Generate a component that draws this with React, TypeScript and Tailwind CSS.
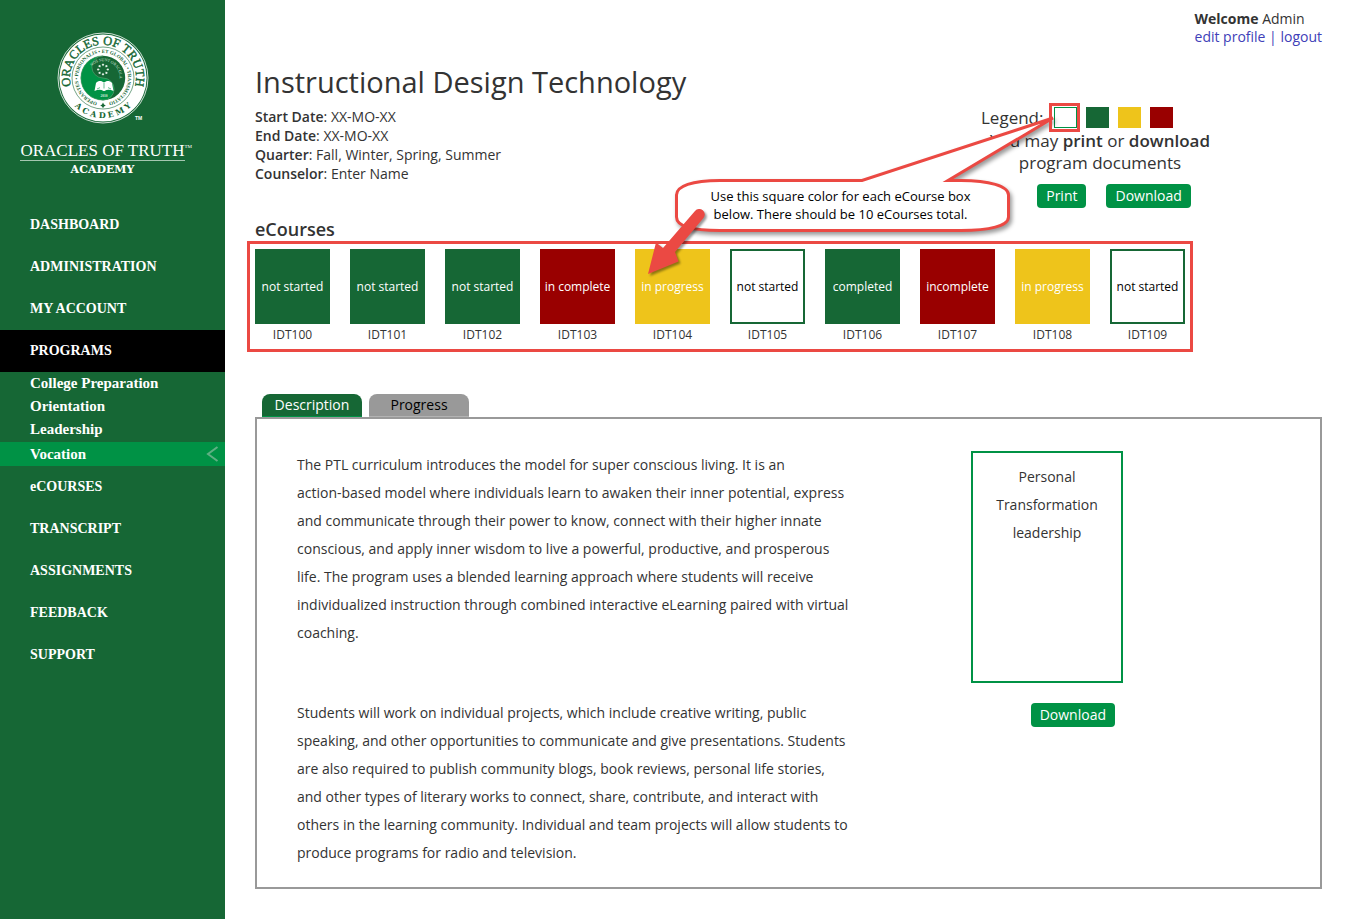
import React from "react";

type Status = "green" | "red" | "yellow" | "empty";

const courses: { code: string; label: string; status: Status }[] = [
  { code: "IDT100", label: "not started", status: "green" },
  { code: "IDT101", label: "not started", status: "green" },
  { code: "IDT102", label: "not started", status: "green" },
  { code: "IDT103", label: "in complete", status: "red" },
  { code: "IDT104", label: "in progress", status: "yellow" },
  { code: "IDT105", label: "not started", status: "empty" },
  { code: "IDT106", label: "completed", status: "green" },
  { code: "IDT107", label: "incomplete", status: "red" },
  { code: "IDT108", label: "in progress", status: "yellow" },
  { code: "IDT109", label: "not started", status: "empty" },
];

const tileStyles: Record<Status, string> = {
  green: "bg-[#166735] text-white",
  red: "bg-[#990000] text-white",
  yellow: "bg-[#eec41b] text-white",
  empty: "border-2 border-[#166735] bg-white text-black",
};

const details = [
  ["Start Date", "XX-MO-XX"],
  ["End Date", "XX-MO-XX"],
  ["Quarter", "Fall, Winter, Spring, Summer"],
  ["Counselor", "Enter Name"],
];

const programs = ["College Preparation", "Orientation", "Leadership"];

function Seal() {
  return (
    <svg width="94" height="94" viewBox="-47 -47 94 94" role="img" aria-label="Oracles of Truth Academy seal">
      <defs>
        <path id="ring-top" d="M-31 11 A33 33 0 1 1 31 11" />
        <path id="ring-bottom" d="M-40 0 A40 40 0 0 0 40 0" />
        <path id="ring-inner" d="M-3 24.8 A25 25 0 1 1 3 24.8" />
        <path id="ring-motto" d="M-13.6 -9 A16.3 16.3 0 0 1 16 4" />
      </defs>
      <circle r="45" fill="none" stroke="#fff" strokeWidth="0.8" />
      <circle r="43.6" fill="#fff" />
      <circle r="31" fill="none" stroke="#166735" strokeWidth="0.6" />
      <circle r="22.2" fill="#166735" />
      <path
        d="M0 -22.2 A22.2 22.2 0 0 0 0 22.2 A11.1 11.1 0 0 0 0 0 A11.1 11.1 0 0 1 0 -22.2Z"
        fill="#009245"
        stroke="#6fae83"
        strokeWidth="0.5"
      />
      <g fontFamily="'Liberation Serif', serif" fill="#166735">
        <text fontSize="12.5" stroke="#166735" strokeWidth="0.4">
          <textPath href="#ring-top" startOffset="50%" textAnchor="middle">ORACLES OF TRUTH</textPath>
        </text>
        <text fontSize="8" fontWeight="700" fontFamily="'DejaVu Serif', serif">
          <textPath href="#ring-bottom" startOffset="50%" textAnchor="middle">A C A D E M Y</textPath>
        </text>
        <text fontSize="5" fontWeight="700">
          <textPath href="#ring-inner" startOffset="50%" textAnchor="middle">
            OPERANTES • PERSONALIS • ET GLOBAL • TRANSMUTATIO
          </textPath>
        </text>
        <text fontSize="4" fill="#dcebdf">
          <textPath href="#ring-motto" startOffset="50%" textAnchor="middle">NOS SUNT ORACULA</textPath>
        </text>
        <text fontSize="3.6" fontWeight="700" fill="#dcebdf" x="1" y="19" textAnchor="middle">2010</text>
      </g>
      <path d="M0 24.6 l1 1.8 1.8 1 -1.8 1 -1 1.8 -1 -1.8 -1.8 -1 1.8 -1z" fill="#166735" />
      <g fill="#e3f0e6">
        {[0, 45, 90, 135, 180, 225, 270, 315].map((angle) => (
          <path key={angle} d="M0 -13.4 l1.3 -1.7 -1.3 -1.1 -1.3 1.1z" transform={`rotate(${angle} 0 -8.5) translate(0 1.6)`} />
        ))}
      </g>
      <path d="M-7 5 C-4.5 2.4 -1.5 2.6 1 4.6 C3.5 2.6 6.5 2.4 9 5 L10.5 13 C7 11.4 4 11.4 1.5 13 L0.5 13 C-2 11.4 -5 11.4 -8.5 13Z" fill="#fff" />
      <path d="M1 5 V10.5 M-6 11 L-3 9.6 M8 11 L5 9.6" stroke="#009245" strokeWidth="0.6" fill="none" />
      <text x="32" y="42" fontSize="5" fontWeight="700" fill="#fff" fontFamily="'Liberation Sans', sans-serif">TM</text>
    </svg>
  );
}

function NavItem({ label, active = false }: { label: string; active?: boolean }) {
  return (
    <li>
      <a
        href="#"
        className={`flex h-[42px] items-center pl-[30px] text-[14px] leading-[20px] ${active ? "bg-black" : ""}`}
      >
        {label}
      </a>
    </li>
  );
}

function Sidebar() {
  return (
    <aside className="w-[225px] shrink-0 bg-[#166735] text-white">
      <div className="flex flex-col items-center pt-[31px] pr-[20px] font-['Liberation_Serif',serif]">
        <Seal />
        <div className="mt-4 flex items-start border-b border-[#a5c7b0]">
          <span className="text-[17px] leading-[19px]">ORACLES OF TRUTH</span>
          <span className="relative w-0">
            <span className="absolute top-[3px] left-0 text-[5px] leading-[6px]">TM</span>
          </span>
        </div>
        <span className="mt-[2px] font-['DejaVu_Serif',serif] text-[11px] leading-[14px] font-bold">ACADEMY</span>
      </div>
      <nav aria-label="Main" className="mt-[27px] font-['Liberation_Serif',serif] font-bold">
        <ul>
          <NavItem label="DASHBOARD" />
          <NavItem label="ADMINISTRATION" />
          <NavItem label="MY ACCOUNT" />
          <NavItem label="PROGRAMS" active />
          <li>
            <ul className="text-[15px] leading-[23px]">
              {programs.map((name) => (
                <li key={name}>
                  <a href="#" className="block pl-[30px]">{name}</a>
                </li>
              ))}
              <li className="pt-px">
                <a href="#" className="flex h-6 items-center justify-between bg-[#009245] pr-[6px] pl-[30px]">
                  Vocation
                  <svg width="13" height="16" viewBox="0 0 13 16" aria-hidden="true">
                    <path d="M11.5 1 L2 8 L11.5 15" fill="none" stroke="#5fb083" strokeWidth="2" />
                  </svg>
                </a>
              </li>
            </ul>
          </li>
          <NavItem label="eCOURSES" />
          <NavItem label="TRANSCRIPT" />
          <NavItem label="ASSIGNMENTS" />
          <NavItem label="FEEDBACK" />
          <NavItem label="SUPPORT" />
        </ul>
      </nav>
    </aside>
  );
}

function ActionButton({ children }: { children: React.ReactNode }) {
  return (
    <button type="button" className="h-6 rounded-[4px] bg-[#009245] px-[9px] text-[14px] leading-[24px] text-white">
      {children}
    </button>
  );
}

function Callout() {
  return (
    <div className="pointer-events-none absolute top-0 -left-[311px] h-[140px] w-[390px]">
      <svg width="390" height="140" viewBox="0 0 390 140" className="absolute inset-0 overflow-visible" aria-hidden="true">
        <path
          d="M50 75.5 H192 L383 13 L278 75.500 H291 C319 75.500 338.500 81 338.500 90 V112 C338.500 121 319 125.500 291 125.500 H50 C22 125.500 6.500 121 6.500 112 V90 C6.500 81 22 75.500 50 75.500Z"
          fill="#fff"
          stroke="#eb4943"
          strokeWidth="3"
          className="drop-shadow-[2px_3px_2px_rgba(0,0,0,0.4)]"
        />
      </svg>
      <p className="relative mt-[82px] w-[341px] text-center text-[13px] leading-[18px] text-black">
        Use this square color for each eCourse box
        <br />
        below. There should be 10 eCourses total.
      </p>
    </div>
  );
}

function DocumentsPanel() {
  return (
    <section className="relative mt-[42px] mr-[101px] w-[240px] shrink-0 text-[17px] leading-[22px]">
      <div className="flex h-[25px] items-center">
        <span className="w-[73px]">Legend:</span>
        <div className="flex gap-[9px]">
          <span className="h-[21px] w-[23px] border border-[#009245]" />
          <span className="h-[21px] w-[23px] bg-[#166735]" />
          <span className="h-[21px] w-[23px] bg-[#eec41b]" />
          <span className="h-[21px] w-[23px] bg-[#990000]" />
        </div>
      </div>
      <p className="pr-[2px] text-center">
        You may <strong className="font-semibold">print</strong> or{" "}
        <strong className="font-semibold">download</strong>
        <br />
        program documents
      </p>
      <div className="mt-[10px] flex justify-center gap-5 pl-[26px]">
        <ActionButton>Print</ActionButton>
        <ActionButton>Download</ActionButton>
      </div>
      <Callout />
      <span className="absolute -top-[2px] left-[68px] h-[29px] w-[31px] border-3 border-[#eb4943]" />
    </section>
  );
}

function PointerArrow() {
  return (
    <svg
      width="70"
      height="75"
      viewBox="0 0 70 75"
      className="pointer-events-none absolute -top-[43px] left-[8px] overflow-visible drop-shadow-[2px_2px_1px_rgba(0,0,0,0.4)]"
      aria-hidden="true"
    >
      <path d="M52 5 A5.500 5.500 0 0 1 60.500 12 L32 46 L35.500 55.500 L5 68 L13 36.500 L20 42 Z" fill="#eb4943" />
    </svg>
  );
}

function CourseList() {
  return (
    <section>
      <h2 className="text-[18px] leading-[24px] font-semibold">eCourses</h2>
      <div className="-ml-2 w-fit border-3 border-[#eb4943] p-[5px]">
        <ul className="flex gap-5">
          {courses.map((course) => (
            <li key={course.code} className="relative w-[75px] text-center text-[12px]">
              <a
                href="#"
                className={`flex h-[75px] items-center justify-center leading-[16px] whitespace-nowrap ${tileStyles[course.status]}`}
              >
                {course.label}
              </a>
              <span className="block h-5 leading-[22px]">{course.code}</span>
              {course.code === "IDT104" && <PointerArrow />}
            </li>
          ))}
        </ul>
      </div>
    </section>
  );
}

function ProgramTabs() {
  return (
    <section className="mt-[42px] text-[14px]">
      <div role="tablist" className="flex gap-[7px] pl-[7px]">
        <button
          type="button"
          role="tab"
          aria-selected="true"
          className="h-[23px] w-[100px] rounded-t-[8px] border-b border-[#009245] bg-[#166735] pb-[2px] text-white"
        >
          Description
        </button>
        <button
          type="button"
          role="tab"
          aria-selected="false"
          className="h-[23px] w-[100px] rounded-t-[8px] border-b border-[#b3b3b3] bg-[#999] pb-[2px] text-black"
        >
          Progress
        </button>
      </div>
      <div role="tabpanel" className="flex border-2 border-[#999] px-10 pt-8 pb-5 leading-[28px]">
        <div className="flex w-[554px] flex-col gap-[52px]">
          <p>
            The PTL curriculum introduces the model for super conscious living. It is an
            <br />
            action-based model where individuals learn to awaken their inner potential, express and
            communicate through their power to know, connect with their higher innate conscious, and
            apply inner wisdom to live a powerful, productive, and prosperous life. The program uses a
            blended learning approach where students will receive individualized instruction through
            combined interactive eLearning paired with virtual coaching.
          </p>
          <p>
            Students will work on individual projects, which include creative writing, public
            speaking, and other opportunities to communicate and give presentations. Students are also
            required to publish community blogs, book reviews, personal life stories, and other types
            of literary works to connect, share, contribute, and interact with others in the learning
            community. Individual and team projects will allow students to produce programs for radio
            and television.
          </p>
        </div>
        <div className="ml-[120px] w-[152px] shrink-0">
          <div className="h-[232px] border-2 border-[#009245] px-4 py-[10px] text-center">
            Personal Transformation leadership
          </div>
          <div className="mt-5 flex justify-end pr-2">
            <ActionButton>Download</ActionButton>
          </div>
        </div>
      </div>
    </section>
  );
}

export default function App() {
  return (
    <div className="flex min-h-screen bg-white font-['Open_Sans',sans-serif] text-[#333]">
      <Sidebar />
      <main className="min-w-0 flex-1 px-[30px] pt-[10px] pb-[30px]">
        <div className="flex justify-end text-[14px] leading-[18px]">
          <div>
            <p>
              <strong>Welcome</strong> Admin
            </p>
            <p className="text-[#4040b8]">
              <a href="#">edit profile</a> | <a href="#">logout</a>
            </p>
          </div>
        </div>
        <header className="mt-[17px] flex h-[154px] justify-between">
          <div>
            <h1 className="text-[29px] leading-[37px] font-medium">Instructional Design Technology</h1>
            <dl className="mt-[7px] text-[14px] leading-[19px]">
              {details.map(([term, value]) => (
                <div key={term}>
                  <dt className="inline font-semibold">{term}</dt>
                  <dd className="inline">: {value}</dd>
                </div>
              ))}
            </dl>
          </div>
          <DocumentsPanel />
        </header>
        <CourseList />
        <ProgramTabs />
      </main>
    </div>
  );
}
